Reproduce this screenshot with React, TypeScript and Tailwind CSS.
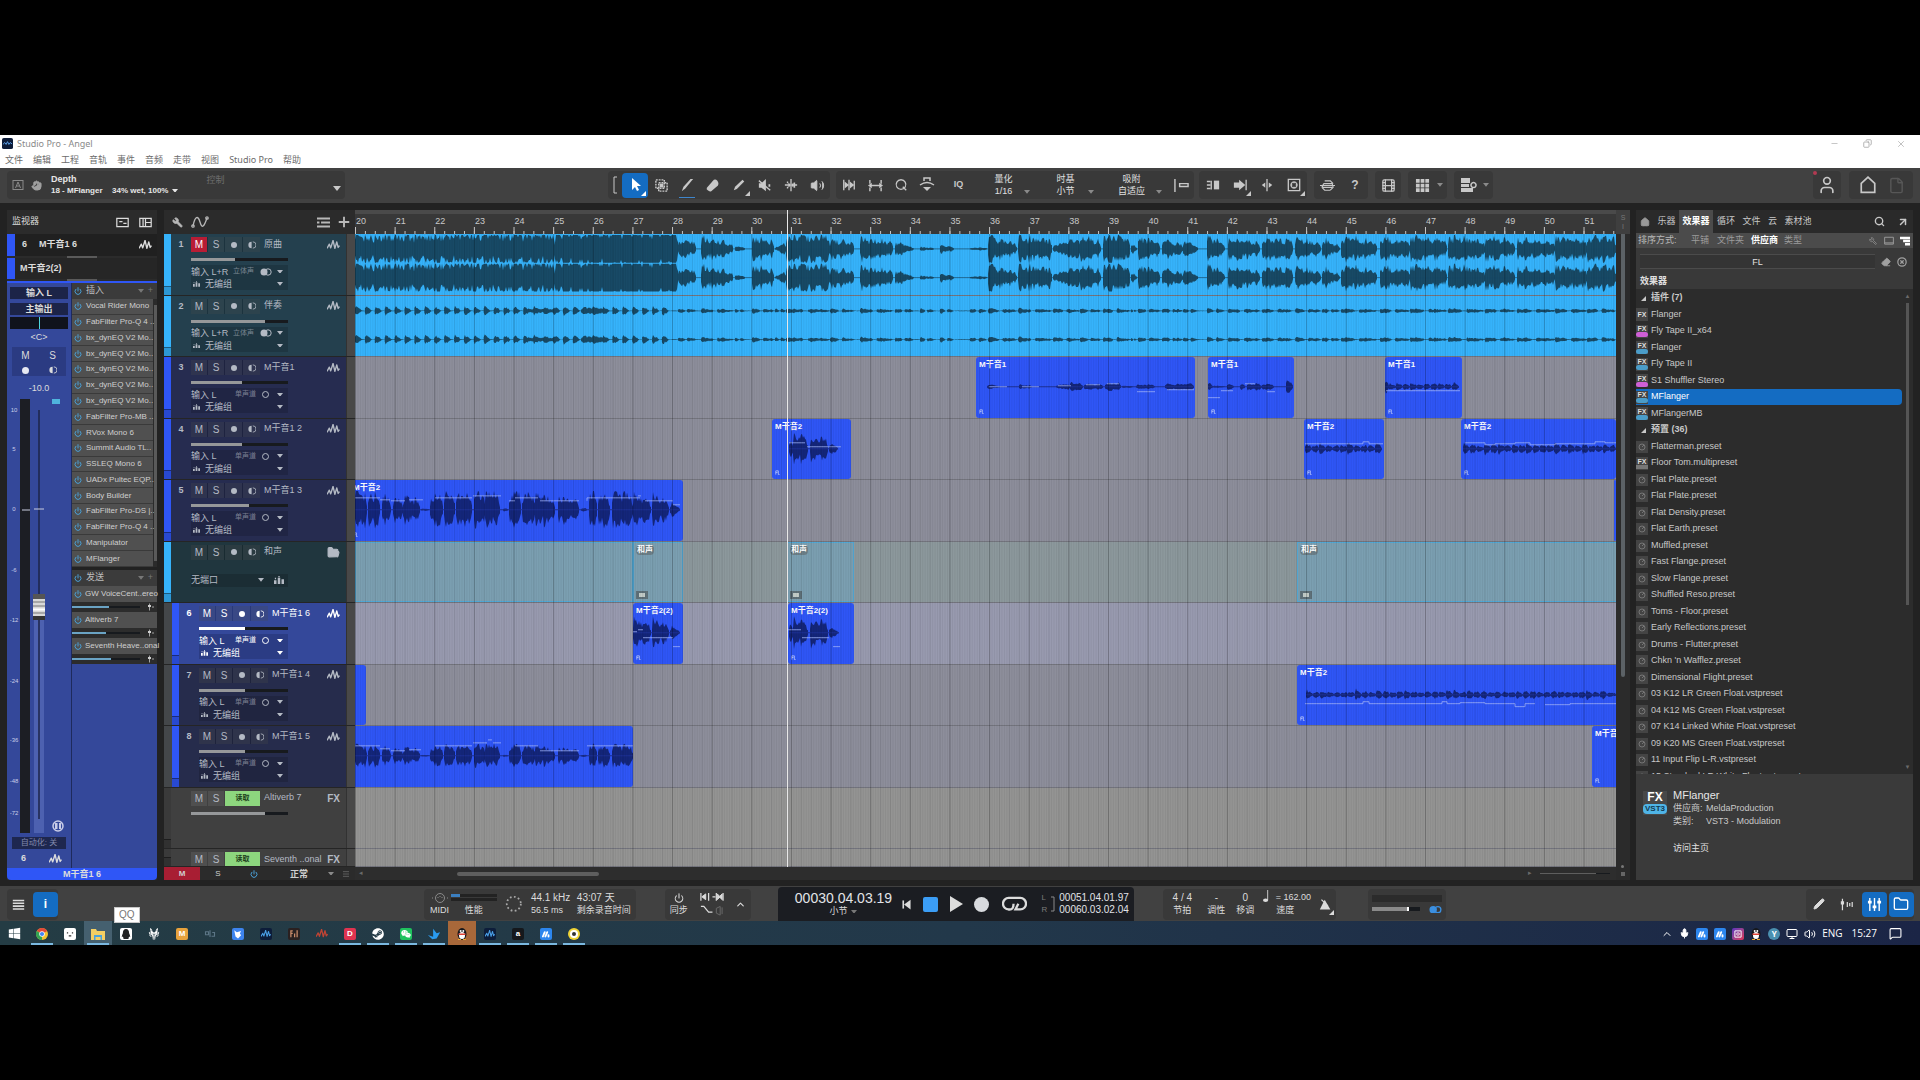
import React from 'react';
import {
  Power, Home, Search, ArrowUpRight, Eraser, Pencil, Hand, Volume2, Brush, FolderOpen, Folder, User,
  File, Wrench, Film, ChevronUp, Mic, Monitor, MessageSquare, CircleX, Minus, Copy, X, Menu,
} from 'lucide-react';
import { FaWindows, FaSteam, FaWeixin, FaQq, FaWolfPackBattalion } from 'react-icons/fa';

// Timeline units
const TOTAL = 1261;
const BAR = 39.63;
const BARS = Array.from({ length: 32 }, (_, i) => 20 + i);
const pct = (v: number) => `${(v / TOTAL) * 100}%`;

const rnd = (i: number) => {
  const v = Math.sin(i * 12.9898) * 43758.5453;
  return v - Math.floor(v);
};

// start, end, level at start, level at end
type Blob = [number, number, number, number];

const wavePath = (blobs: Blob[], mid: number, amp: number, rough = 0.5) => {
  let d = '';
  blobs.forEach(([a, b, s, e]) => {
    const top: string[] = [];
    const bottom: string[] = [];
    for (let x = a; x <= b; x += 1) {
      const k = (x - a) / Math.max(1, b - a);
      const edge = Math.min(1, (x - a + 1) / 2, (b - x + 1) / 3);
      const pulse = 1 - 0.35 * ((x % 9.9) / 9.9);
      const level = (s + (e - s) * k) * edge * pulse * amp;
      const up = Math.min(amp, level * (1 - rough * rnd(x * 1.7)));
      const down = Math.min(amp, level * (1 - rough * rnd(x * 2.3 + 5)));
      top.push(`${x.toFixed(1)} ${(mid - up).toFixed(1)}`);
      bottom.unshift(`${x.toFixed(1)} ${(mid + down).toFixed(1)}`);
    }
    d += `M${top.join('L')}L${bottom.join('L')}Z`;
  });
  return d;
};

const MIX: Blob[] = [
  [0, 200, 1.3, 1.7], [200, 323, 1.9, 2.4], [323, 341, 0.9, 0.6], [346, 378, 1.2, 0.5], [380, 390, 0.3, 0.2],
  [397, 419, 1.1, 0.7], [420, 431, 0.1, 0.7], [431, 475, 1.4, 1.3], [475, 499, 1, 0.7], [505, 538, 1.1, 0.7],
  [540, 559, 0.8, 0.1], [565, 579, 0.2, 0.1], [585, 599, 0.4, 0.25], [615, 632, 0.1, 0.15], [633, 662, 1.3, 0.5],
  [663, 697, 1.2, 1], [698, 725, 0.3, 1.1], [725, 746, 1.2, 0.7], [748, 775, 1.4, 1.2], [776, 782, 0.5, 0.4],
  [783, 805, 1.2, 0.6], [807, 828, 0.9, 0.5], [828, 843, 0.9, 0.3], [852, 870, 1.2, 0.5], [873, 905, 1.3, 0.5],
  [907, 938, 1.1, 0.9], [940, 966, 1.1, 0.5], [967, 985, 1, 0.3], [986, 1022, 1.2, 0.7], [1025, 1055, 1.1, 0.8],
  [1055, 1092, 1.3, 0.8], [1093, 1130, 1.2, 0.8], [1130, 1160, 1.2, 0.7], [1162, 1200, 1.1, 0.6], [1200, 1232, 1.2, 0.8],
  [1232, 1261, 1.3, 1.1],
];

const BACKING: Blob[] = [
  [0, 1261, 0.08, 0.08],
  ...Array.from({ length: 32 }, (_, i): Blob => [i * 9.9, i * 9.9 + 7, 1, 0.3]),
  [172, 200, 0.5, 0.5],
  [226, 250, 0.8, 0.7],
  ...MIX.slice(2).map(([a, b]): Blob => [a, a + (b - a) * 0.4, 0.6, 0.3]),
  ...MIX.slice(2).map(([a, b]): Blob => [a + (b - a) * 0.5, b, 0.5, 0.2]),
];

const PHRASE: Blob[] = [
  [0, 12, 1.2, 1.1], [13, 25, 1.2, 1], [27, 36, 1.1, 0.6], [38, 48, 0.8, 0.7], [48, 65, 1, 0.6], [66, 74, 0.08, 0.08],
  [75, 88, 0.8, 1.2], [89, 100, 1.2, 1.1], [101, 117, 1.1, 1], [119, 130, 1.3, 1.2], [130, 145, 1.3, 0.9], [148, 153, 0.1, 0.1],
  [154, 166, 1.1, 1.2], [167, 180, 1.1, 1.2], [180, 200, 1.2, 0.7], [203, 224, 1, 0.6], [226, 232, 0.15, 0.1],
  [234, 242, 1.2, 1.2], [243, 255, 1.2, 1], [257, 278, 1.2, 1.1],
];
const PHRASE_END: Blob[] = [[278, 296, 1.1, 0.7], [297, 314, 1.1, 0.6], [315, 325, 0.5, 0.2]];
const PHRASE_LINE = 'M0 18H25M25 20H35M36 21H50M54 20H68M80 18H117M118 16H146M154 21H160M160 18H183M185 21H224M232 21V18H285M283 16H286M290 21H318M318 25H325';

type Clip = {
  from: number;
  to: number;
  name?: string;
  blobs?: Blob[];
  amp?: number;
  line?: string;
  kind?: 'folder' | 'plain';
};

const shortBlobs = (from: number, to: number, level: number): Blob[] => {
  const out: Blob[] = [];
  for (let x = from; x < to; x += 7) out.push([x, Math.min(to, x + 7), level * (0.5 + 0.7 * rnd(x)), level * 0.5]);
  return out;
};

type Track = {
  no?: string;
  name: string;
  kind: 'audio' | 'folder' | 'fx';
  stripe: string;
  header: string;
  lane: string;
  muted?: boolean;
  nested?: boolean;
  selected?: boolean;
  stereo?: boolean;
  level: number;
  clips: Clip[];
};

const BLUE = 'bg-[#2f56f6]';
const CYAN = 'bg-[#36b3fb]';
const LANE = 'bg-[#8d8e9b]';

const TRACKS: Track[] = [
  { no: '1', name: '原曲', kind: 'audio', stripe: CYAN, header: 'bg-[#24404e]', lane: CYAN, muted: true, stereo: true, level: 45, clips: [] },
  { no: '2', name: '伴奏', kind: 'audio', stripe: CYAN, header: 'bg-[#24404e]', lane: CYAN, stereo: true, level: 76, clips: [] },
  {
    no: '3', name: 'M干音1', kind: 'audio', stripe: BLUE, header: 'bg-[#262c50]', lane: LANE, level: 53,
    clips: [
      { from: 621, to: 840, name: 'M干音1', amp: 9, line: 'M634 30H652M667 30H684M703 29H716M731 28H745M752 27H764M782 35H800M812 33H839', blobs: [[632, 645, 0.3, 0.2], [664, 677, 0.3, 0.2], [701, 715, 0.2, 0.5], [715, 728, 0.7, 0.4], [729, 748, 0.4, 0.4], [750, 766, 0.6, 0.5], [767, 778, 0.2, 0.1], [781, 800, 0.3, 0.3], [810, 839, 0.4, 0.5]] },
      { from: 853, to: 939, name: 'M干音1', amp: 9, line: 'M853 41H865M866 34H878M890 27H900M912 35H920', blobs: [[853, 858, 0.6, 0.3], [858, 870, 0.15, 0.1], [872, 879, 0.5, 0.4], [885, 890, 0.4, 0.5], [892, 907, 0.5, 0.4], [907, 919, 0.5, 0.4], [931, 938, 1, 0.6]] },
      { from: 1030, to: 1107, name: 'M干音1', amp: 9, line: 'M1031 34H1105', blobs: [[1030, 1034, 1, 0.6], ...shortBlobs(1034, 1104, 0.6)] },
    ],
  },
  {
    no: '4', name: 'M干音1 2', kind: 'audio', stripe: BLUE, header: 'bg-[#262c50]', lane: LANE, level: 53,
    clips: [
      { from: 417, to: 496, name: 'M干音2', amp: 16, line: 'M434 24H450M452 28H486', blobs: [[434, 438, 0.6, 1.1], [438, 453, 1.3, 0.8], [455, 473, 0.9, 0.8], [474, 483, 0.5, 0.2]] },
      { from: 949, to: 1029, name: 'M干音2', amp: 10, line: 'M950 25H1008V23H1014V25H1028', blobs: shortBlobs(950, 1027, 0.8) },
      { from: 1106, to: 1261, name: 'M干音2', amp: 10, line: 'M1110 24H1130V26H1140V25H1160V24H1175V26H1200V25H1240V23H1250V24H1261', blobs: shortBlobs(1108, 1261, 0.75) },
    ],
  },
  {
    no: '5', name: 'M干音1 3', kind: 'audio', stripe: BLUE, header: 'bg-[#262c50]', lane: LANE, level: 60,
    clips: [
      { from: -5, to: 328, name: 'M干音2', amp: 19, line: PHRASE_LINE, blobs: [...PHRASE, ...PHRASE_END] },
      { from: 1259, to: 1261, kind: 'plain' },
    ],
  },
  {
    name: '和声', kind: 'folder', stripe: CYAN, header: 'bg-[#20363e]', lane: 'bg-[#8c989c]', level: 0,
    clips: [
      { from: 0, to: 278, kind: 'folder' },
      { from: 278, to: 328, name: '和声', kind: 'folder' },
      { from: 432, to: 499, name: '和声', kind: 'folder' },
      { from: 942, to: 1265, name: '和声', kind: 'folder' },
    ],
  },
  {
    no: '6', name: 'M干音1 6', kind: 'audio', stripe: BLUE, header: 'bg-[#34489a]', lane: 'bg-[#989aaf]', nested: true, selected: true, level: 52,
    clips: [
      { from: 278, to: 328, name: 'M干音2(2)', amp: 17, line: 'M278 29H282M283 27H288M288 35H318M318 44H325', blobs: PHRASE_END },
      { from: 433, to: 499, name: 'M干音2(2)', amp: 17, line: 'M433 27H446M447 35H474M478 44H485', blobs: [[434, 438, 0.7, 1.1], [438, 453, 1.2, 0.6], [455, 473, 1, 0.8], [474, 484, 0.5, 0.1]] },
    ],
  },
  {
    no: '7', name: 'M干音1 4', kind: 'audio', stripe: BLUE, header: 'bg-[#262c4c]', lane: LANE, nested: true, level: 52,
    clips: [
      { from: -5, to: 11, kind: 'plain' },
      { from: 942, to: 1265, name: 'M干音2', amp: 9, line: 'M950 39H1008V37H1014V39H1087V37H1092V39H1105V38H1130V39H1160V42H1170V39H1180M1190 40H1215V39H1261', blobs: shortBlobs(951, 1261, 0.7) },
    ],
  },
  {
    no: '8', name: 'M干音1 5', kind: 'audio', stripe: BLUE, header: 'bg-[#262c4c]', lane: LANE, nested: true, level: 52,
    clips: [
      { from: -5, to: 278, kind: 'plain', amp: 12, line: 'M0 20H25M25 23H35M36 25H50M54 24H66M80 20H117M118 17H132M133 14H137M138 17H146M160 20H183M185 25H224M232 20H278', blobs: PHRASE },
      { from: 1237, to: 1265, name: 'M干音1' },
    ],
  },
  { name: 'Altiverb 7', kind: 'fx', stripe: 'bg-[#3a3a3a]', header: 'bg-[#404040]', lane: 'bg-[#949493]', level: 76, clips: [] },
  { name: 'Seventh ..onal', kind: 'fx', stripe: 'bg-[#3a3a3a]', header: 'bg-[#404040]', lane: 'bg-[#949493]', level: 76, clips: [] },
];

const ROWS = 'grid min-h-0 flex-1 grid-rows-[repeat(10,minmax(0,123fr))_minmax(0,36fr)] overflow-hidden';

const WaveIcon = ({ className = 'w-[13px]' }: { className?: string }) => (
  <svg viewBox="0 0 14 10" className={`${className} shrink-0`} fill="none" stroke="currentColor" strokeWidth="1.5" strokeLinejoin="round">
    <path d="M0 9 2.500 4.500 4 8.500 6.500 0.500 8.500 9 10.500 2 12 8 13.500 6" />
  </svg>
);

const Caret = ({ className = '' }: { className?: string }) => (
  <svg viewBox="0 0 8 5" className={`w-[6px] shrink-0 ${className}`} fill="currentColor"><path d="M0 0h8L4 5z" /></svg>
);

const GroupIcon = ({ className = 'w-[7px]' }: { className?: string }) => (
  <svg viewBox="0 0 12 10" className={`${className} shrink-0`} fill="currentColor">
    <path d="M0 5h3v5H0zM4.500 2h3v8h-3zM9 4h3v6H9zM1 2h1.500v2H1zM5.200 0h1.600v1.500H5.200z" />
  </svg>
);

const HalfDot = () => (
  <svg viewBox="0 0 10 10" className="w-[8px]"><path d="M4.500 1a4 4 0 0 0 0 8z" fill="currentColor" /><path d="M6 1a4 4 0 0 1 0 8" fill="none" stroke="currentColor" /></svg>
);

const Slider = ({ label, value, fill, className }: { label: string; value: number; fill: string; className: string }) => (
  <div className={`relative bg-[#171a1e] ${className}`}>
    <div className={`h-full ${fill}`} style={{ width: `${value}%` }} />
    <input type="range" aria-label={label} defaultValue={value} className="absolute inset-0 h-full w-full cursor-pointer opacity-0" />
  </div>
);

const Picker = ({ label, value, className = '' }: { label: string; value: string; className?: string }) => (
  <select aria-label={label} className={`appearance-none bg-transparent text-[9px] leading-[12px] ${className}`}>
    <option>{value}</option>
  </select>
);

const TitleBar = () => (
  <header className="shrink-0 bg-white font-['Noto_Sans','Noto_Sans_CJK_SC',sans-serif] text-[9px] text-[#8a8a8a]">
    <div className="flex h-[17px] items-center gap-1 pl-[2px]">
      <svg viewBox="0 0 12 12" className="w-[11px]"><rect width="12" height="12" rx="2" fill="#0d1b38" /><path d="M1 7l2-2 1.500 2L6 4l1.500 3L9 5l2 1.500" stroke="#5fa8f5" fill="none" /></svg>
      <h1 className="flex-1 text-[9px]">Studio Pro - Angel</h1>
      <div className="flex items-center gap-6 pr-[14px] text-[#9c9c9c]">
        <button aria-label="最小化"><Minus size={9} strokeWidth={1.5} /></button>
        <button aria-label="还原"><Copy size={9} strokeWidth={2} className="-scale-x-100" /></button>
        <button aria-label="关闭"><X size={10} strokeWidth={1.5} /></button>
      </div>
    </div>
    <nav className="flex h-4 items-start gap-[10px] pl-[5px] leading-[15px] text-[#6b6b6b]">
      {['文件', '编辑', '工程', '音轨', '事件', '音频', '走带', '视图', 'Studio Pro', '帮助'].map((m) => (
        <button key={m}>{m}</button>
      ))}
    </nav>
  </header>
);

const Group = ({ className = '', children }: { className?: string; children: React.ReactNode }) => (
  <div className={`flex h-7 items-center rounded bg-[#393939] ${className}`}>{children}</div>
);

const Tool = ({ label, className = 'w-[26px]', children }: { label: string; className?: string; children: React.ReactNode }) => (
  <button aria-label={label} className={`relative flex h-[25px] shrink-0 items-center justify-center ${className}`}>{children}</button>
);

const Glyph = ({ d, fill, className = 'w-4' }: { d: string; fill?: string; className?: string }) => (
  <svg viewBox="0 0 16 16" className={className} fill="none" stroke="currentColor" strokeWidth="1.5">
    <path d={d} />
    {fill && <path d={fill} fill="currentColor" stroke="none" />}
  </svg>
);

const Corner = () => (
  <svg viewBox="0 0 5 5" className="absolute bottom-[2px] right-[2px] w-[5px]" fill="currentColor"><path d="M5 0v5H0z" /></svg>
);

const Choice = ({ label, value, className }: { label: string; value: string; className: string }) => (
  <label className="flex items-end text-[9px] leading-[12px] text-[#e0e0e0]">
    <span className={`flex flex-col text-center ${className}`}>
      <span>{label}</span>
      <Picker label={label} value={value} className="text-center" />
    </span>
    <Caret className="mb-[3px] text-[#8a8a8a]" />
  </label>
);

const Toolbar = () => (
  <div className="flex h-[35px] shrink-0 items-center bg-[#414141] px-[7px] pb-[1px] text-[#c8c8c8]">
    <Group className="w-[338px] pl-[5px] pr-1">
      <svg viewBox="0 0 12 12" className="w-3 text-[#8a8a8a]" fill="none" stroke="currentColor"><rect x="1" y="1.500" width="10" height="9" /><path d="M3.500 9 6 3l2.500 6M4.500 7h3" /></svg>
      <Hand size={11} fill="currentColor" className="ml-[7px] text-[#a0a0a0]" />
      <div className="ml-[9px] text-[9px] font-bold leading-[11px] text-[#e6e6e6]">
        <p>Depth</p>
        <p className="flex items-center text-[8px]"><span className="w-[61px] shrink-0 whitespace-nowrap">18 - MFlanger</span>34% wet, 100%<Caret className="ml-1" /></p>
      </div>
      <span className="mb-2 ml-[28px] flex-1 text-[9px] text-[#6e6e6e]">控制</span>
      <button aria-label="参数列表" className="self-end pb-2"><Caret className="w-[8px]" /></button>
    </Group>
    <div className="flex-268" />
    <Group>
      <svg viewBox="0 0 14 20" className="w-[14px]" fill="none" stroke="currentColor"><path d="M9 2H6v16h3" /></svg>
      <Tool label="箭头工具" className="w-[26px] rounded bg-[#146cc2] text-white"><Glyph d="" fill="M5 1v12l3-3 2 4 2-1-2-4h4z" /><Corner /></Tool>
      <Tool label="范围工具"><Glyph d="M2 2h9v9H2zM5 5h9v9H5z" fill="M6 6h4v4H6z" className="w-[15px] [stroke-dasharray:2_1]" /></Tool>
      <Tool label="拆分工具">
        <Glyph d="" fill="M2 15l2-5 8-9h3L6 12z" className="w-[14px]" />
        <span className="absolute inset-x-[5px] bottom-0 h-px bg-[#3f86cc]" />
      </Tool>
      <Tool label="橡皮工具"><Glyph d="M8 4l5 5" fill="M1 11l8-9q2-1 4 1l1 2q1 2-1 4l-7 6q-2 1-4-1-2-1-1-3z" className="w-[14px]" /></Tool>
      <Tool label="绘图工具"><Glyph d="" fill="M2 14l1.500-4L12 2l2 2-8.500 8.500z" className="w-[14px]" /><Corner /></Tool>
      <Tool label="静音工具"><Glyph d="M1 3l13 11" fill="M1 6h3l5-5v14l-5-4H1zM12 7h2v3h-2z" className="w-[14px]" /></Tool>
      <Tool label="弯曲工具"><Glyph d="M8 1v14M1 8h5M10 8h5M4 4v2M4 10v2M12 5v6" fill="M5 5l3 3-3 3zM11 5 8 8l3 3z" className="w-[14px]" /></Tool>
      <Tool label="聆听工具"><Volume2 size={15} fill="currentColor" strokeWidth={1.500} /></Tool>
    </Group>
    <Group className="ml-[6px]">
      <Tool label="前进"><Glyph d="M2 2v12M14 3v10M8 2v12" fill="M3 4l5 4-5 4zM9 4l5 4-5 4z" className="w-[14px]" /></Tool>
      <Tool label="间距"><Glyph d="M2 2v4M2 10v4M14 2v4M14 10v4M3 8h10" fill="M0 8l4-3v6zM16 8l-4-3v6z" className="w-[15px]" /></Tool>
      <Tool label="量化"><Glyph d="M8 2a5.500 5.500 0 1 0 .01 0M10 10l4 4" className="w-[14px]" /></Tool>
      <Tool label="宏"><Glyph d="M5 4V1h6v3M1 8q7-5 14 0" fill="M4 10h8l-4 4z" /></Tool>
      <Tool label="输入量化" className="w-9"><span className="text-[9px] font-bold">IQ</span></Tool>
      <div className="flex gap-3 pl-[6px] pr-[6px]">
        <Choice label="量化" value="1/16" className="w-[42px]" />
        <Choice label="时基" value="小节" className="w-[46px]" />
        <Choice label="吸附" value="自适应" className="w-[50px]" />
      </div>
      <Tool label="自动滚动"><Glyph d="M1 1v14M6 6h9v3H6z" className="w-[15px]" /></Tool>
    </Group>
    <Group className="ml-[5px]">
      <Tool label="标记" className="w-[27px]"><Glyph d="M1 4h4M1 8h4M1 12h4M6 3v10" fill="M9 3h6v10H9z" className="w-[14px]" /></Tool>
      <Tool label="跟随" className="w-[27px]"><Glyph d="M15 2v12" fill="M1 5h6V2l7 6-7 6v-3H1z" className="w-[14px]" /><Corner /></Tool>
      <Tool label="光标" className="w-[27px]"><Glyph d="M8 1v14" fill="M6 5v6L2 8zM10 5v6l4-3z" className="w-[14px]" /></Tool>
      <Tool label="循环" className="w-[27px]"><Glyph d="M1.500 1.500h13v13h-13zM8 4v2M8 10v2M4 8h2M10 8h2M8 4.500a3.500 3.500 0 1 0 .01 0" className="w-[14px]" /><Corner /></Tool>
    </Group>
    <Group className="ml-[7px]">
      <Tool label="宏工具" className="w-[27px]"><Glyph d="M5 3h6l3 3M2 10l3 3h6M4 6h9M3 10h10M0 8h16M4 6 2 10M13 6l1 4-3 3" className="w-[15px] [stroke-width:1.2]" /></Tool>
      <Tool label="帮助" className="w-[27px]"><span className="text-[12px] font-bold">?</span></Tool>
    </Group>
    <Group className="ml-[7px]"><Tool label="视频"><Film size={15} /></Tool></Group>
    <Group className="ml-[7px] pr-1">
      <Tool label="网格" className="w-[29px]"><Glyph d="" fill="M1 1h4v4H1zM6 1h4v4H6zM11 1h4v4h-4zM1 6h4v4H1zM6 6h4v4H6zM11 6h4v4h-4zM1 11h4v4H1zM6 11h4v4H6zM11 11h4v4h-4z" className="w-[15px]" /></Tool>
      <Caret className="text-[#8a8a8a]" />
    </Group>
    <Group className="ml-[7px] pr-1">
      <Tool label="视图设置" className="w-[29px]"><Glyph d="M12.500 5.500a2.500 2.500 0 1 0 .01 0" fill="M0 1h9v5H0zM0 7h8v3H0zM0 11h12v4H0z" /></Tool>
      <Caret className="text-[#8a8a8a]" />
    </Group>
    <div className="flex-325" />
    <Group className="relative mr-2 px-1">
      <span className="absolute left-0 top-0 size-1 rounded-full bg-[#b23a52]" />
      <Tool label="用户" className="w-5"><User size={20} /></Tool>
    </Group>
    <Group className="gap-[6px] px-[7px]">
      <Tool label="开始页" className="w-6"><Glyph d="M2 6.500 8 1l6 5.500v8H2z" className="w-[18px]" /></Tool>
      <Tool label="文档" className="w-5 text-[#575757]"><File size={17} /></Tool>
    </Group>
  </div>
);

const INSERTS = [
  'Vocal Rider Mono', 'FabFilter Pro-Q 4 ..', 'bx_dynEQ V2 Mo..', 'bx_dynEQ V2 Mo..', 'bx_dynEQ V2 Mo..', 'bx_dynEQ V2 Mo..',
  'bx_dynEQ V2 Mo..', 'FabFilter Pro-MB ..', 'RVox Mono 6', 'Summit Audio TL..', 'SSLEQ Mono 6', 'UADx Pultec EQP..',
  'Body Builder', 'FabFilter Pro-DS |..', 'FabFilter Pro-Q 4 ..', 'Manipulator', 'MFlanger',
];
const SENDS = [
  { name: 'GW VoiceCent..ereo', level: 45 },
  { name: 'Altiverb 7', level: 40 },
  { name: 'Seventh Heave..onal', level: 47 },
];
const SCALE: [string, number][] = [['10', 11], ['5', 50], ['0', 110], ['-6', 171], ['-12', 221], ['-24', 282], ['-36', 341], ['-48', 382], ['-72', 414]];

const RackHeader = ({ title }: { title: string }) => (
  <div className="flex h-4 shrink-0 items-center gap-1 bg-[#3b3b3b] pl-[2px] pr-1 text-[9px] text-[#bdbdbd]">
    <Power size={8} className="text-[#4a9fd6]" strokeWidth={3} />
    <span className="flex-1">{title}</span>
    <Caret className="text-[#777]" />
    <span className="text-[#777]">+</span>
  </div>
);

const Inspector = () => (
  <aside className="flex w-[150px] shrink-0 flex-col bg-[#2b2b2b] text-[#dcdcdc]">
    <div className="flex h-6 shrink-0 items-center gap-[10px] pl-[5px] pr-[5px] text-[9px]">
      <span className="flex-1">监视器</span>
      <Glyph d="M1 3h14v10H1zM4 7h4M9 9h4" className="w-[13px]" />
      <Glyph d="M1 3h14v10H1zM8 3v10M5 3v10M8 8h7" className="w-[13px]" />
    </div>
    <div className="flex h-[22px] shrink-0 items-center border-l-8 border-[#2f56f6] bg-[#202020] pl-[7px] pr-[5px] text-[9px] font-bold">
      <span className="w-[17px]">6</span><span className="flex-1">M干音1 6</span><WaveIcon />
    </div>
    <div className="mx-auto h-[2px] w-[30px] shrink-0 bg-[#5a5a5a]" />
    <div className="flex h-[21px] shrink-0 items-center border-l-8 border-[#2f56f6] bg-[#262626] pl-[5px] text-[9px] font-bold">M干音2(2)</div>
    <div className="mx-auto h-[2px] w-[30px] shrink-0 bg-[#5a5a5a]" />
    <div className="flex min-h-0 flex-1 border-t-2 border-[#2f56f6] bg-[#34489a]">
      <div className="flex w-[65px] shrink-0 flex-col items-stretch border-r border-[#1e2a5c] px-[3px] pt-1 text-[9px]">
        <Picker label="输入" value="输入 L" className="h-[12px] bg-[#1c2448]! text-center font-bold" />
        <Picker label="输出" value="主输出" className="mt-1 h-[12px] bg-[#1c2448]! text-center font-bold" />
        <div className="mt-[2px] flex h-3 justify-center bg-[#10131c]"><span className="w-px bg-[#4fd6e0]" /></div>
        <p className="mt-[2px] text-center leading-[12px]">&lt;C&gt;</p>
        <div className="mx-[2px] mt-1 grid h-[29px] grid-cols-2 place-items-center bg-[#2b3b82] text-[10px] leading-[14px]">
          <button>M</button><button>S</button>
          <button aria-label="录音" className="size-[7px] rounded-full bg-[#e6e8f2]" />
          <button aria-label="监听"><HalfDot /></button>
        </div>
        <p className="mt-[5px] text-center leading-[14px]">-10.0</p>
        <svg viewBox="0 0 58 434" className="mt-1 w-full shrink-0" fill="none">
          <path d="M10 0h10v434H10z" fill="#1c1e24" />
          <path d="M24 200h10v234H24z" fill="#4d61b0" />
          <path d="M29 11v409" stroke="#1c2448" strokeWidth="1.5" />
          <path d="M12 111h8M24 110h10" stroke="#c9cde0" />
          <rect x="42" y="0" width="8" height="5" fill="#4fb4dd" />
          <g className="fill-[#c9cde8] text-[6px]" textAnchor="middle">
            {SCALE.map(([t, y]) => <text key={t} x="4" y={y + 2}>{t}</text>)}
          </g>
          <path d="M23 195h12v25H23z" fill="#d8d8d8" />
          <path d="M23 195h12v5H23z" fill="#555" />
          <path d="M23 203h12M23 207h12M23 214h12" stroke="#777" />
          <path d="M23 210.500h12" stroke="#fff" strokeWidth="2" />
          <path d="M23 217h12v4H23z" fill="#333" />
          <circle cx="48" cy="427" r="5" stroke="#c9cde8" strokeWidth="1.500" />
          <path d="M45 424h2.500v6H45zM49 424h2v6h-2z" fill="#c9cde8" />
        </svg>
        <button className="mx-[2px] mt-[4px] h-[12px] shrink-0 bg-[#1e274f] text-[8px] leading-[12px] text-[#8289ac]">自动化: 关</button>
        <div className="flex flex-1 items-center justify-between pl-[11px] pr-[6px] font-bold"><span>6</span><WaveIcon /></div>
      </div>
      <div className="flex min-w-0 flex-1 flex-col">
        <RackHeader title="插入" />
        <div className="flex h-[268px] shrink-0 bg-[#2b2b2b]">
          <ul className="flex min-w-0 flex-1 flex-col">
            {INSERTS.map((name, i) => (
              <li key={i} className="flex min-h-0 flex-1 items-center gap-1 whitespace-nowrap border-b border-[#3a3a3a] bg-[#505050] pl-[2px] text-[8px] text-[#cfcfcf]">
                <Power size={8} strokeWidth={3} className="shrink-0 text-[#4a9fd6]" />{name}
              </li>
            ))}
          </ul>
          <div className="my-[6px] ml-px w-[3px] bg-[#5a5a5a]" />
        </div>
        <div className="h-[3px] shrink-0 bg-[#222]" />
        <RackHeader title="发送" />
        {SENDS.map((s) => (
          <div key={s.name} className="shrink-0 bg-[#2c2c2c] pb-px text-[8px] text-[#cfcfcf]">
            <div className="flex h-4 items-center gap-[3px] whitespace-nowrap bg-[#505050] pl-[2px]">
              <Power size={8} strokeWidth={3} className="shrink-0 text-[#4a9fd6]" />{s.name}
            </div>
            <div className="flex h-[9px] items-center justify-between pr-[2px]">
              <Slider label={s.name} value={s.level + 10} fill="bg-[#6aa3c4]" className="h-[2px] w-[68px]" />
              <Glyph d="M5 1v14M12 6v4" fill="M2 4h6v4H2z" className="w-[8px]" />
            </div>
          </div>
        ))}
      </div>
    </div>
    <div className="h-[12px] shrink-0 rounded-b bg-[#2f56f6] text-center text-[9px] font-bold leading-[12px]">M干音1 6</div>
  </aside>
);

const TrackHeader = ({ track }: { track: Track }) => {
  const tone = track.selected ? 'text-white' : 'text-[#b4bac4]';
  const field = track.selected ? 'bg-[#2b3c84]' : 'bg-black/15';
  const fx = track.kind === 'fx';
  return (
    <li className="flex min-h-0 overflow-hidden border-b border-black/40 bg-[#3e3e3e]">
      {track.nested && <span className="w-2 shrink-0 bg-[#44474a]" />}
      <span className={`flex w-[7px] shrink-0 flex-col justify-end ${track.stripe}`}>
        <span className="h-[9px] border-t border-black/40 bg-black/15" />
      </span>
      <div className={`flex min-w-0 flex-1 pt-[2px] ${track.header} ${tone}`}>
        <span className="w-5 shrink-0 text-center text-[9px] font-bold leading-[17px]">{track.no}</span>
        <div className="min-w-0 flex-1">
          <div className="flex h-[17px] items-center pr-[6px]">
            <div className={`mr-[4px] flex h-[15px] shrink-0 gap-px text-[10px] ${fx ? '' : 'bg-black/20'}`}>
              <button className={`w-[16px] ${track.muted ? 'bg-[#b81d35] text-white' : 'bg-white/8'}`}>M</button>
              <button className="w-[16px] bg-white/8">S</button>
              {fx ? (
                <button className="w-[35px] bg-[#8dd67e] text-[7px] font-bold text-[#20401c]">读取</button>
              ) : (
                <>
                  <button aria-label="录音启用" className="flex w-[17px] items-center justify-center bg-white/8"><span className="size-[6px] rounded-full bg-current" /></button>
                  <button aria-label="监听" className="flex w-[17px] items-center justify-center bg-white/8"><HalfDot /></button>
                </>
              )}
            </div>
            <span className="min-w-0 flex-1 whitespace-nowrap text-[9px]">{track.name}</span>
            {track.kind === 'audio' && <WaveIcon />}
            {track.kind === 'folder' && <FolderOpen size={13} fill="currentColor" />}
            {fx && <span className="text-[10px] font-bold">FX</span>}
          </div>
          {track.kind === 'folder' ? (
            <div className={`mr-[58px] mt-[13px] flex h-[13px] items-center ${field}`}>
              <Picker label="通道" value="无端口" className="flex-1" /><Caret className="mr-[10px]" /><GroupIcon className="mr-1 w-[10px]" />
            </div>
          ) : (
            <div className="mr-[58px]">
              <Slider label={`${track.name} 音量`} value={track.level} fill={track.selected ? 'bg-white' : 'bg-[#96989a]'} className="mt-[5px] h-[3px]" />
              {!fx && (
                <div className={`mt-[4px] ${field}`}>
                  <div className="flex h-[13px] items-center pr-[5px]">
                    <Picker label="输入" value={track.stereo ? '输入 L+R' : '输入 L'} className="min-w-0 flex-1" />
                    <span className={`mr-[6px] text-[7px] ${track.selected ? '' : 'opacity-60'}`}>{track.stereo ? '立体声' : '单声道'}</span>
                    {track.stereo ? (
                      <svg viewBox="0 0 12 8" className="mr-[5px] w-[12px]"><circle cx="4" cy="4" r="3.500" fill="currentColor" /><circle cx="8" cy="4" r="3.200" fill="none" stroke="currentColor" /></svg>
                    ) : (
                      <span className="mr-[8px] size-[7px] rounded-full border border-current" />
                    )}
                    <Caret />
                  </div>
                  <div className="flex h-[12px] items-center pl-[2px] pr-[5px]">
                    <GroupIcon className="mr-[5px] w-[7px]" /><Picker label="编组" value="无编组" className="flex-1" /><Caret />
                  </div>
                </div>
              )}
            </div>
          )}
        </div>
      </div>
      <span className="w-[9px] shrink-0 border-l border-black/30 bg-[#484848]" />
    </li>
  );
};

const ClipView = ({ clip }: { clip: Clip }) => {
  const box = { left: pct(clip.from), width: pct(clip.to - clip.from) };
  if (clip.kind === 'folder') {
    return (
      <div className="absolute inset-y-0 flex flex-col items-start justify-between border border-[#52a9d6] bg-[#7b9fb1] p-[2px]" style={box}>
        {clip.name && (
          <>
            <span className="rounded-sm bg-[#6c7f88] px-px text-[8px] font-bold leading-[10px] text-white">{clip.name}</span>
            <span className="flex h-[8px] w-[12px] items-center justify-center bg-[#5e7078]"><span className="h-1 w-[6px] bg-[#c2ccc8]" /></span>
          </>
        )}
      </div>
    );
  }
  return (
    <div className="absolute inset-y-0 overflow-hidden rounded-[3px] bg-[#2f56f6]" style={box}>
      {clip.blobs && (
        <svg viewBox={`${clip.from} 0 ${clip.to - clip.from} 61`} preserveAspectRatio="none" className="absolute inset-0 h-full w-full">
          <path d={wavePath(clip.blobs, 30, clip.amp ?? 10)} fill="#14267a" />
          <path d={`M${clip.blobs[0][0]} 30H${clip.blobs[clip.blobs.length - 1][1]}`} stroke="#1c3194" />
          <path d={clip.line} fill="none" stroke="#9fb2fb" strokeWidth="0.8" />
        </svg>
      )}
      {clip.name && (
        <>
          <span className="absolute left-[3px] top-[2px] whitespace-nowrap text-[8px] font-bold leading-[12px] text-white">{clip.name}</span>
          <svg viewBox="0 0 6 6" className="absolute bottom-1 left-[3px] w-[5px]" fill="none" stroke="#b8c5fc"><path d="M1 5.500V1h3M4 1v4.500h1.500M1 3h2" /></svg>
        </>
      )}
    </div>
  );
};

const MixWave = ({ loud }: { loud: boolean }) => (
  <svg viewBox={`0 0 ${TOTAL} 61`} preserveAspectRatio="none" className="absolute inset-0 h-full w-full" fill="#184a66">
    {loud ? (
      <>
        <path d={wavePath(MIX, 15, 14, 0.55)} />
        <path d={wavePath(MIX, 44, 14, 0.55)} />
        <path d="M323 15H1261M323 44H1261" stroke="#184a66" strokeWidth="0.7" />
      </>
    ) : (
      <>
        <path d={wavePath(BACKING, 15, 6)} />
        <path d={wavePath(BACKING, 44, 6)} />
      </>
    )}
  </svg>
);

const lines = (step: number, top: number, bottom: number) => {
  let d = '';
  for (let x = 0.5; x < TOTAL; x += step) d += `M${x.toFixed(2)} ${top}V${bottom}`;
  return d;
};

const Arrange = () => (
  <section className="flex min-w-0 flex-1">
    <div className="flex w-[191px] shrink-0 flex-col bg-[#2b2b2b]">
      <div className="flex h-6 shrink-0 items-center gap-2 pl-2 pr-[5px] text-[#b8b8b8]">
        <Wrench size={11} fill="currentColor" className="-scale-x-100" />
        <svg viewBox="0 0 18 12" className="w-[18px]" fill="none" stroke="currentColor" strokeWidth="1.300"><path d="M2 10C4 0 7-1 9 6s4 5 7-4" /><circle cx="2" cy="10" r="1.200" /><circle cx="16" cy="2" r="1.200" /></svg>
        <span className="flex-1" />
        <Glyph d="M0 3h16M0 13h16M0 8h3M5 8h11" className="w-[13px] [stroke-width:2.5]" />
        <Glyph d="M8 1v14M1 8h14" className="w-[12px] [stroke-width:2.5]" />
      </div>
      <ul className={ROWS}>{TRACKS.map((t) => <TrackHeader key={t.name} track={t} />)}</ul>
      <div className="flex h-[13px] shrink-0 items-center text-[9px] text-[#d0d0d0]">
        <button className="h-full w-9 bg-[#a81e33] text-[8px] font-bold">M</button>
        <button className="w-9 text-[8px]">S</button>
        <button aria-label="启用" className="flex w-9 justify-center"><Power size={8} strokeWidth={3} className="text-[#4a9fd6]" /></button>
        <Picker label="自动化模式" value="正常" className="w-[54px] text-center font-bold" />
        <Caret className="ml-[2px] text-[#8a8a8a]" />
        <Menu size={8} className="ml-2 text-[#777]" />
      </div>
    </div>

    <div className="flex min-w-0 flex-1 flex-col">
      <div className="relative flex min-h-0 flex-1 flex-col overflow-hidden">
        <div className="relative flex h-6 shrink-0 overflow-hidden border-t-4 border-[#4a4a4a] bg-[#383838]">
          {BARS.map((b) => (
            <span key={b} className="shrink-0 pl-px text-[9px] leading-[14px] text-[#c8c8c8]" style={{ width: pct(BAR) }}>{b}</span>
          ))}
          <svg viewBox={`0 0 ${TOTAL} 20`} preserveAspectRatio="none" className="absolute inset-0 h-full w-full" stroke="#c4c4c4">
            <path d={lines(BAR, 13, 20)} />
            <path d={lines(BAR / 4, 17, 20)} />
          </svg>
        </div>
        <div className={`relative ${ROWS}`}>
          {TRACKS.map((t, i) => (
            <div key={t.name} className={`relative overflow-hidden border-b border-[#74757e] ${t.lane}`}>
              {i < 2 && <MixWave loud={i === 0} />}
              {t.clips.map((c) => <ClipView key={c.from} clip={c} />)}
            </div>
          ))}
          <svg viewBox={`0 0 ${TOTAL} 100`} preserveAspectRatio="none" className="pointer-events-none absolute inset-0 h-full w-full" stroke="#000">
            <path d={lines(BAR, 0, 100)} strokeOpacity="0.16" />
            <path d={lines(BAR / 4, 0, 100)} strokeOpacity="0.06" />
            <path d={lines(BAR / 16, 0, 100)} strokeOpacity="0.05" />
          </svg>
        </div>
        <div className="absolute inset-y-0 w-px bg-[#e8e8e8]" style={{ left: pct(432) }} />
      </div>
      <div className="flex h-[13px] shrink-0 items-center bg-[#2d2d2d] text-[#6a6a6a]">
        <span className="pl-1 text-[7px]">◂</span>
        <div className="ml-[94px] h-1 w-[142px] rounded bg-[#5e5e5e]" />
        <span className="flex-1" />
        <span className="pr-2 text-[7px]">▸</span>
        <Slider label="水平缩放" value={80} fill="bg-[#5e5e5e]" className="mr-[6px] h-px w-[70px]" />
      </div>
    </div>

    <div className="flex w-[14px] shrink-0 flex-col items-center bg-[#2b2b2b] text-[#777]">
      <div className="flex h-6 w-full flex-col items-center justify-center bg-[#3f3f3f] text-[7px] leading-[9px]"><span>S</span><span>I</span></div>
      <div className="h-[443px] w-1 rounded-b bg-[#5c6266]" />
      <span className="mt-auto flex flex-col gap-1 pb-1"><span className="size-[3px] rounded-full bg-[#777]" /><span className="size-1 bg-[#666]" /></span>
    </div>
  </section>
);

type Row = { name: string; icon: 'group' | 'fx' | 'vst2' | 'vst3' | 'preset' | 'multi'; active?: boolean };
const preset = (name: string): Row => ({ name, icon: 'preset' });
const LIST: Row[] = [
  { name: '插件 (7)', icon: 'group' },
  { name: 'Flanger', icon: 'fx' },
  { name: 'Fly Tape II_x64', icon: 'vst2' },
  { name: 'Flanger', icon: 'vst3' },
  { name: 'Fly Tape II', icon: 'vst3' },
  { name: 'S1 Shuffler Stereo', icon: 'vst2' },
  { name: 'MFlanger', icon: 'vst3', active: true },
  { name: 'MFlangerMB', icon: 'vst3' },
  { name: '预置 (36)', icon: 'group' },
  preset('Flatterman.preset'),
  { name: 'Floor Tom.multipreset', icon: 'multi' },
  ...[
    'Flat Plate.preset', 'Flat Plate.preset', 'Flat Density.preset', 'Flat Earth.preset', 'Muffled.preset', 'Fast Flange.preset',
    'Slow Flange.preset', 'Shuffled Reso.preset', 'Toms - Floor.preset', 'Early Reflections.preset', 'Drums - Flutter.preset',
    "Chkn 'n Wafflez.preset", 'Dimensional Flight.preset', '03 K12 LR Green Float.vstpreset', '04 K12 MS Green Float.vstpreset',
    '07 K14 Linked White Float.vstpreset', '09 K20 MS Green Float.vstpreset', '11 Input Flip L-R.vstpreset',
    '15 Standard LR White Float.vstpreset',
  ].map(preset),
];

const RowIcon = ({ icon }: { icon: Row['icon'] }) => {
  if (icon === 'preset') {
    return (
      <svg viewBox="0 0 12 12" className="w-3 shrink-0" fill="none" stroke="#757575"><rect width="12" height="12" fill="#444" stroke="none" /><circle cx="6" cy="6" r="3" /><path d="M6 6l2-2" /></svg>
    );
  }
  return (
    <span className="flex h-[13px] w-3 shrink-0 flex-col justify-center bg-[#454545] text-center text-[7px] font-bold leading-[7px] text-[#dcdcdc]">
      FX
      {icon === 'vst2' && <span className="h-[5px] rounded-sm bg-[#cf5fd6]" />}
      {icon === 'vst3' && <span className="h-[5px] rounded-sm bg-[#4a9cc8]" />}
      {icon === 'multi' && <span className="h-[4px] bg-[#777]" />}
    </span>
  );
};

const Browser = () => (
  <aside className="flex w-[277px] shrink-0 flex-col bg-[#393939] text-[9px] text-[#c8c8c8]">
    <div className="flex h-[23px] shrink-0 items-center bg-[#2a2a2a]">
      <button aria-label="主页" className="flex w-[18px] justify-center text-[#999]"><Home size={10} fill="currentColor" /></button>
      <button className="w-[25px]">乐器</button>
      <button className="h-full w-[34px] bg-[#4b4b4b] font-bold text-white">效果器</button>
      <button className="w-[26px]">循环</button>
      <button className="w-[25px]">文件</button>
      <button className="w-[17px]">云</button>
      <button className="w-[34px]">素材池</button>
      <span className="flex-1" />
      <button aria-label="搜索"><Search size={11} strokeWidth={3} /></button>
      <button aria-label="分离" className="ml-[12px] mr-1"><ArrowUpRight size={12} strokeWidth={3} /></button>
    </div>
    <div className="flex h-[15px] shrink-0 items-center bg-[#4b4b4b] pl-[2px] text-[#9c9c9c]">
      <span className="w-[53px] text-[#b8b8b8]">排序方式:</span>
      <button className="w-[26px] text-left">平铺</button>
      <button className="w-[34px] text-left">文件夹</button>
      <button className="w-[33px] text-left font-bold text-white">供应商</button>
      <button>类型</button>
      <span className="flex-1" />
      <Wrench size={8} className="-scale-x-100" />
      <Glyph d="M1 2h14v11H1zM1 11h14" className="ml-[7px] w-[10px]" />
      <Glyph d="" fill="M0 1h16v4H0zM5 6h11v4H5zM8 11h8v4H8z" className="ml-[6px] mr-[3px] w-[10px] text-white" />
    </div>
    <div className="flex h-[27px] shrink-0 items-center gap-[6px] pl-[4px] pr-[6px] text-[#a0a0a0]">
      <input aria-label="搜索效果器" defaultValue="FL" className="h-[15px] min-w-0 flex-1 border-y border-[#4b4b4b] bg-[#343434] text-center text-[#e0e0e0]" />
      <Eraser size={10} fill="currentColor" />
      <CircleX size={10} strokeWidth={3} />
    </div>
    <h2 className="h-[14px] shrink-0 pl-1 font-bold leading-[12px] text-[#e0e0e0]">效果器</h2>
    <div className="flex min-h-0 flex-1 bg-[#2c2c2c]">
      <ul className="min-w-0 flex-1 overflow-hidden pt-[1px]">
        {LIST.map((r, i) => (
          <li key={i} className={`flex items-center gap-[3px] whitespace-nowrap odd:h-4 even:h-[17px] ${r.active ? 'rounded-r bg-[#146cc2] text-white' : ''}`}>
            {r.icon === 'group' ? (
              <>
                <svg viewBox="0 0 5 5" className="mx-[5px] w-[5px]" fill="currentColor"><path d="M5 0v5H0z" /></svg>
                <span className="-ml-[3px] font-bold">{r.name}</span>
              </>
            ) : (
              <><RowIcon icon={r.icon} />{r.name}</>
            )}
          </li>
        ))}
      </ul>
      <div className="flex w-[11px] flex-col items-center py-1 text-[6px] leading-[6px] text-[#6a6a6a]">
        <span>▲</span><span className="mt-1 h-[302px] w-[3px] bg-[#555]" /><span className="mt-auto">▼</span>
      </div>
    </div>
    <div className="flex h-[106px] shrink-0 gap-[6px] bg-[#3a3a3a] pl-[7px] pt-[14px]">
      <div className="mt-[3px] h-6 w-6 shrink-0 bg-[#484848] text-center text-[12px] font-bold leading-[13px] text-white">
        FX
        <span className="block rounded-sm bg-[#4fb4e6] text-[8px] leading-[10px] text-[#123a50]">VST3</span>
      </div>
      <div className="leading-[13px]">
        <h3 className="text-[11px] leading-[14px] text-[#e6e6e6]">MFlanger</h3>
        <p className="flex"><span className="w-[33px]">供应商:</span>MeldaProduction</p>
        <p className="flex"><span className="w-[33px]">类别:</span>VST3 - Modulation</p>
        <a href="#home" className="mt-[14px] block text-[#e0e0e0]">访问主页</a>
      </div>
    </div>
  </aside>
);

const Stat = ({ value, label, className }: { value: React.ReactNode; label: React.ReactNode; className: string }) => (
  <div className={`flex flex-col whitespace-nowrap leading-[13px] ${className}`}><span className="text-[10px]">{value}</span><span className="text-[9px]">{label}</span></div>
);

const Transport = () => (
  <div className="flex h-[35px] shrink-0 items-center bg-[#414141] px-[7px] pt-px text-[9px] text-[#dcdcdc]">
    <Group className="h-[31px] gap-[7px] pl-1">
      <button aria-label="菜单" className="flex w-[15px] justify-center"><Glyph d="M1 3h14M1 6.500h14M1 10h14M1 13.500h14" className="w-[13px] [stroke-width:2]" /></button>
      <button className="size-[25px] rounded bg-[#146cc2] text-[12px] font-bold text-white">i</button>
    </Group>
    <div className="flex-368" />
    <Group className="h-[31px] w-[212px] px-[5px]">
      <div className="flex w-[22px] flex-col items-center leading-[13px]">
        <svg viewBox="0 0 16 12" className="h-[12px]" fill="none" stroke="#8a8a8a"><circle cx="8" cy="6" r="4.500" /><path d="M0 6h1M15 6h1M6 5v1M8 4v1M10 5v1" /></svg>
        <span>MIDI</span>
      </div>
      <div className="flex w-[48px] flex-col items-center leading-[13px]">
        <div className="my-[3px] flex h-[7px] w-[46px] flex-col gap-px"><span className="h-[3px] bg-[#222]"><span className="block h-full w-[9px] bg-[#3b7fc0]" /></span><span className="h-[3px] bg-[#222]" /></div>
        <span>性能</span>
      </div>
      <svg viewBox="0 0 20 20" className="mx-2 w-[18px]" fill="none" stroke="#a8a8a8" strokeWidth="2" strokeDasharray="2 2.700"><circle cx="10" cy="10" r="8" /></svg>
      <Stat value="44.1 kHz" label="56.5 ms" className="w-[47px]" />
      <Stat value="43:07 天" label="剩余录音时间" className="w-[54px]" />
    </Group>
    <div className="flex-29" />
    <Group className="h-[31px] w-[86px] justify-between px-[5px]">
      <div className="flex flex-col items-center leading-[13px]"><Power size={10} strokeWidth={2.500} className="my-px" /><span>同步</span></div>
      <svg viewBox="0 0 28 26" className="w-[27px]" fill="none" stroke="currentColor"><path d="M3 2v8M11 2v8M15 6h3M19 2v8M26 2v8M3 16h3l5 6h4" strokeWidth="1.300" /><path d="M4 6l4-3v6zM20 3l3 3-3 3zM25 3l-3 3 3 3z" fill="currentColor" /><path d="M19 18v5l4 2v-9zM25 17v7" stroke="#6a6a6a" /></svg>
      <ChevronUp size={11} strokeWidth={2.500} />
    </Group>
    <div className="flex-28" />
    <div className="flex h-full w-[356px] shrink-0 items-center rounded-t bg-[#1b1d22] pl-[15px]">
      <div className="flex w-[100px] flex-col items-center">
        <span className="text-[14px] leading-[15px] text-[#e2e4e8]">00030.04.03.19</span>
        <span className="flex items-center gap-1 leading-[11px]">小节 <Caret className="text-[#777]" /></span>
      </div>
      <button aria-label="返回" className="ml-[7px] w-4"><Glyph d="M4 3v10" fill="M13 2v12L5 8z" className="w-[13px] [stroke-width:2]" /></button>
      <button aria-label="停止" className="ml-[7px] size-[15px] rounded-[2px] bg-[#3b9df5]" />
      <button aria-label="播放" className="ml-[10px]"><Glyph d="" fill="M2 0v16l13-8z" className="w-4" /></button>
      <button aria-label="录音" className="ml-[10px] size-[15px] rounded-full bg-[#d8dade]" />
      <button aria-label="循环" className="ml-[13px]">
        <svg viewBox="0 0 26 16" className="w-[25px]" fill="none" stroke="currentColor" strokeWidth="2.400"><path d="M10 14H7A6 6 0 0 1 7 2h12a6 6 0 0 1 0 12h-5l3-6M6 14c5 1 6-2 6-6" /></svg>
      </button>
      <div className="ml-[14px] flex flex-col text-[8px] leading-[12px] text-[#7a7a7a]"><span>L</span><span>R</span></div>
      <svg viewBox="0 0 4 16" className="mx-1 w-1" fill="none" stroke="#8a8a8a"><path d="M0 1h3v14H0" /></svg>
      <div className="flex flex-col text-[10px] leading-[12px] text-[#e2e4e8]"><span>00051.04.01.97</span><span>00060.03.02.04</span></div>
    </div>
    <div className="flex-29" />
    <Group className="h-[31px] w-[173px] text-center">
      <Stat value="4 / 4" label="节拍" className="w-[38px]" />
      <Stat value="-" label="调性" className="w-[30px]" />
      <Stat value="0" label="移调" className="w-[28px]" />
      <div className="relative ml-1 flex w-[52px] flex-col whitespace-nowrap leading-[13px]"><span className="pl-2 text-[9px]">= 162.00</span><span className="pr-2">速度</span><svg viewBox="0 0 7 14" className="absolute left-0 top-[-1px] w-[6px]" fill="currentColor"><ellipse cx="3" cy="12" rx="3" ry="2" /><path d="M5 0h1v12H5z" /></svg></div>
      <Tool label="节拍器" className="w-[21px]"><Glyph d="M3 2l8 8" fill="M7 2l7 12H1z" className="w-[13px]" /><Corner /></Tool>
    </Group>
    <div className="flex-32" />
    <Group className="h-[31px] w-[78px] flex-col justify-center gap-1 px-1">
      <span className="h-[7px] w-[70px] bg-[#2b2b2b]" />
      <div className="flex w-full items-center justify-between">
        <Slider label="主音量" value={76} fill="border-r-2 border-white bg-[#8a8a8a]" className="h-1 w-[48px]" />
        <svg viewBox="0 0 14 8" className="w-[13px]"><circle cx="4.500" cy="4" r="4" fill="#3b8fe0" /><circle cx="9.500" cy="4" r="3.300" fill="none" stroke="#3b8fe0" strokeWidth="1.400" /></svg>
      </div>
    </Group>
    <div className="flex-362" />
    <Group className="-mr-px h-[31px] gap-[2px]">
      <Tool label="编辑"><Pencil size={12} fill="currentColor" /></Tool>
      <Tool label="通道"><Glyph d="M3 1v14M9 5v6M12 6v4M15 5v6" fill="M1 4h4v4H1z" className="w-[13px]" /></Tool>
      <Tool label="混音" className="w-[25px] rounded bg-[#146cc2] text-white"><Glyph d="M3 1v14M8 1v14M13 1v14" fill="M1 4h4v3H1zM6 9h4v3H6zM11 4h4v3h-4z" className="w-[15px]" /></Tool>
      <Tool label="浏览" className="w-[25px] rounded bg-[#146cc2] text-white"><Folder size={16} /></Tool>
    </Group>
  </div>
);

const Tile = ({ className = '', children }: { className?: string; children?: React.ReactNode }) => (
  <span className={`flex size-3 items-center justify-center overflow-hidden rounded-[2px] text-[8px] font-bold leading-none text-white ${className}`}>{children}</span>
);

const MTile = () => (
  <Tile className="bg-[#2c86ee]"><Glyph d="M3 12 6 5M7 12l3-7M12 10v2" className="w-[10px] [stroke-linecap:round] [stroke-width:3]" /></Tile>
);

const Chrome = () => (
  <svg viewBox="0 0 24 24" className="w-3">
    <circle cx="12" cy="12" r="12" fill="#f2c12e" />
    <path d="M12 12 1.600 6A12 12 0 0 1 22.400 6z" fill="#e2483a" />
    <path d="M12 12 1.600 6A12 12 0 0 0 12 24z" fill="#33a353" />
    <circle cx="12" cy="12" r="5.500" fill="#fff" /><circle cx="12" cy="12" r="4.200" fill="#4285f4" />
  </svg>
);

const Explorer = () => (
  <svg viewBox="0 0 14 12" className="w-[14px]"><path d="M0 1h5l1 2h8v9H0z" fill="#f4cf63" /><path d="M3 7h8v5H9.500V9h-5v3H3z" fill="#4aa3dd" /></svg>
);

const Penguin = () => (
  <svg viewBox="0 0 12 12" className="w-3"><ellipse cx="6" cy="6" rx="4.500" ry="6" fill="#17181c" /><ellipse cx="6" cy="7.500" rx="3" ry="3.500" fill="#fff" /><path d="M2.500 5.500h7v1.500h-7z" fill="#e04336" /><path d="M2 11h3v1H2zM7 11h3v1H7z" fill="#f0a52e" /><circle cx="4.700" cy="3" r="1" fill="#fff" /><circle cx="7.300" cy="3" r="1" fill="#fff" /></svg>
);

const TASKS: { label: string; icon: React.ReactNode; open?: boolean; cell?: string }[] = [
  { label: '开始', icon: <FaWindows size={13} /> },
  { label: 'Chrome', icon: <Chrome />, open: true },
  { label: '表情', icon: <Tile className="bg-white"><Glyph d="M4 5v2M12 5v2M6 11h4" className="w-[10px] text-[#333] [stroke-width:2]" /></Tile> },
  { label: '文件资源管理器', icon: <Explorer />, open: true, cell: 'bg-[#45606f]' },
  { label: 'QQ', icon: <Tile className="bg-white"><FaQq size={10} className="text-[#222]" /></Tile> },
  { label: 'Foobar', icon: <FaWolfPackBattalion size={12} /> },
  { label: 'M', icon: <Tile className="bg-[#e8a23c]">M</Tile> },
  { label: 'Tools', icon: <Glyph d="M2 5h4v4H2zM8 3v9M11 6h3v5h-4" className="w-3 text-[#5c7686]" /> },
  { label: 'Bird', icon: <Tile className="bg-[#3d84ee]"><Glyph d="" fill="M2 2l4 3 7-2-2 4 2 3-5 5-4-3z" className="w-[10px]" /></Tile> },
  { label: 'Studio', icon: <Tile className="bg-[#0d1d3a]"><WaveIcon className="w-[10px] text-[#4aa0e8]" /></Tile> },
  { label: 'Meter', icon: <Tile className="bg-[#2a2020]"><Glyph d="M3 13V3h3M3 7h3M9 13V7M13 13V2" className="w-[10px] text-[#c98a6a] [stroke-width:2]" /></Tile> },
  { label: 'Ampl', icon: <WaveIcon className="w-3 text-[#c04434]" /> },
  { label: 'Dict', icon: <Tile className="bg-[#e03350]">D</Tile>, open: true },
  { label: 'Steam', icon: <FaSteam size={12} />, open: true },
  { label: '微信', icon: <Tile className="bg-[#1fc25e]"><FaWeixin size={10} /></Tile>, open: true },
  { label: 'Swift', icon: <Glyph d="" fill="M1 9l6 2 0-9 4 5 4-1-4 7-5 1z" className="w-[14px] text-[#2a9bf0]" />, open: true },
  { label: 'QQ 聊天', icon: <Penguin />, cell: 'bg-[#a8683a]' },
  { label: 'Studio Pro', icon: <Tile className="bg-[#0d1d3a]"><WaveIcon className="w-[10px] text-[#4aa0e8]" /></Tile>, open: true },
  { label: 'Recorder', icon: <Tile className="bg-[#15181c]">a</Tile>, open: true },
  { label: 'M App', icon: <MTile />, open: true },
  { label: 'Player', icon: <Tile className="rounded-full! bg-[#f0d436]"><span className="size-1 rounded-full bg-[#333] ring-2 ring-white" /></Tile>, open: true },
];

const Taskbar = () => (
  <footer className="relative flex h-6 shrink-0 items-stretch bg-linear-to-r from-[#243c44] via-[#22384a] to-[#1b2546] text-white">
    {TASKS.map((t) => (
      <button key={t.label} aria-label={t.label} className={`relative flex w-7 items-center justify-center pt-px ${t.cell ?? ''}`}>
        {t.icon}
        {t.open && <span className="absolute inset-x-[3px] bottom-0 h-[2px] bg-[#7ab8e0]" />}
      </button>
    ))}
    <span className="absolute bottom-full left-[114px] -mb-[2px] border border-[#c8c8c8] bg-white px-[4px] text-[10px] leading-[14px] text-[#777]">QQ</span>
    <div className="ml-auto flex items-center gap-[6px] pr-[18px] pt-px font-['Open_Sans',sans-serif] text-[10px]">
      <ChevronUp size={12} />
      <Mic size={11} fill="currentColor" />
      <MTile />
      <MTile />
      <Tile className="bg-linear-to-br from-[#5a2cc0] to-[#e02c50]"><Glyph d="M3 3h10v10H3zM8 6a2 2 0 1 0 .01 0" className="w-[10px]" /></Tile>
      <Penguin />
      <Tile className="rounded-full! bg-[#4a90b0]">Y</Tile>
      <Monitor size={12} />
      <Volume2 size={12} />
      <button>ENG</button>
      <time className="ml-[3px] mr-[6px]">15:27</time>
      <button aria-label="通知"><MessageSquare size={13} /></button>
    </div>
  </footer>
);

const App: React.FC = () => (
  <div className="h-screen bg-black py-[135px] font-['Liberation_Sans','Noto_Sans_CJK_SC',sans-serif]">
    <div className="flex h-full min-w-0 flex-col overflow-hidden bg-[#222222]">
      <TitleBar />
      <Toolbar />
      <main className="flex min-h-0 flex-1 px-[7px] pb-[6px] pt-[7px]">
        <Inspector />
        <div className="w-[7px] shrink-0" />
        <Arrange />
        <div className="w-[6px] shrink-0" />
        <Browser />
      </main>
      <Transport />
      <Taskbar />
    </div>
  </div>
);

export default App;
